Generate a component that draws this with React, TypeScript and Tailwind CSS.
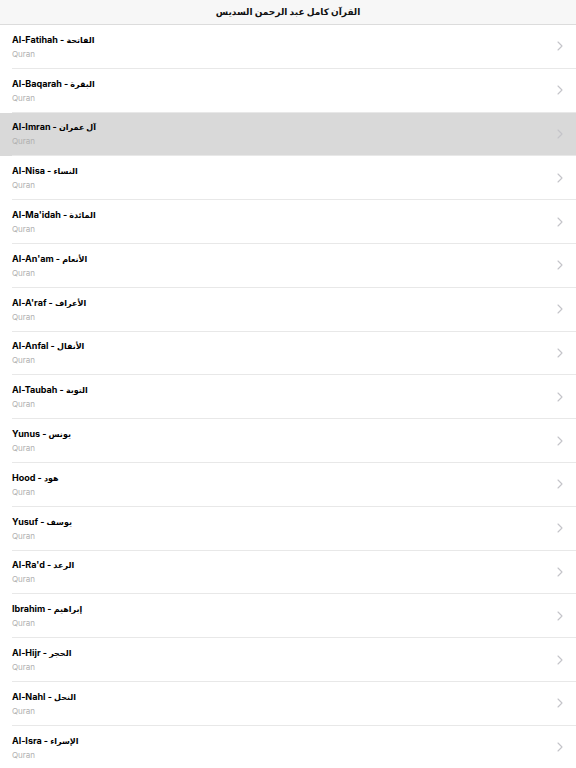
import React from "react";

const surahs: [string, string][] = [
  ["Al-Fatihah", "الفاتحة"],
  ["Al-Baqarah", "البقرة"],
  ["Al-Imran", "آل عمران"],
  ["Al-Nisa", "النساء"],
  ["Al-Ma'idah", "المائدة"],
  ["Al-An'am", "الأنعام"],
  ["Al-A'raf", "الأعراف"],
  ["Al-Anfal", "الأنفال"],
  ["Al-Taubah", "التوبة"],
  ["Yunus", "يونس"],
  ["Hood", "هود"],
  ["Yusuf", "يوسف"],
  ["Al-Ra'd", "الرعد"],
  ["Ibrahim", "إبراهيم"],
  ["Al-Hijr", "الحجر"],
  ["Al-Nahl", "النحل"],
  ["Al-Isra", "الإسراء"],
];

const Chevron = () => (
  <svg width="6" height="10" viewBox="0 0 6 10" fill="none">
    <path d="M1 1l4 4-4 4" stroke="#c4c4c9" strokeWidth="1.1" strokeLinecap="round" strokeLinejoin="round" />
  </svg>
);

export default function App() {
  return (
    <div className="w-[576px] h-[768px] overflow-hidden bg-white font-['Inter','DejaVu_Sans',sans-serif]">
      <div className="h-[25px] bg-[#f7f7f7] border-b border-[#dcdcdc] flex items-center justify-center">
        <span className="text-[9px] font-bold text-[#111]" dir="rtl">
          القرآن كامل عبد الرحمن السديس
        </span>
      </div>
      {surahs.map(([en, ar], i) => (
        <div key={i} className={`pl-3 ${i === 2 ? "bg-[#d9d9d9]" : "bg-white"}`}>
          <div className="h-[43.8px] flex items-center justify-between pr-[13px] border-b border-[#e8e8e8]">
            <div className="flex flex-col">
              <span className="text-[9px] leading-[12px] font-bold text-black">
                {en} - <span className="text-[8px] font-semibold">{ar}</span>
              </span>
              <span className="text-[8px] leading-[10px] mt-[3px] text-[#b0b0b0]">Quran</span>
            </div>
            <Chevron />
          </div>
        </div>
      ))}
    </div>
  );
}
